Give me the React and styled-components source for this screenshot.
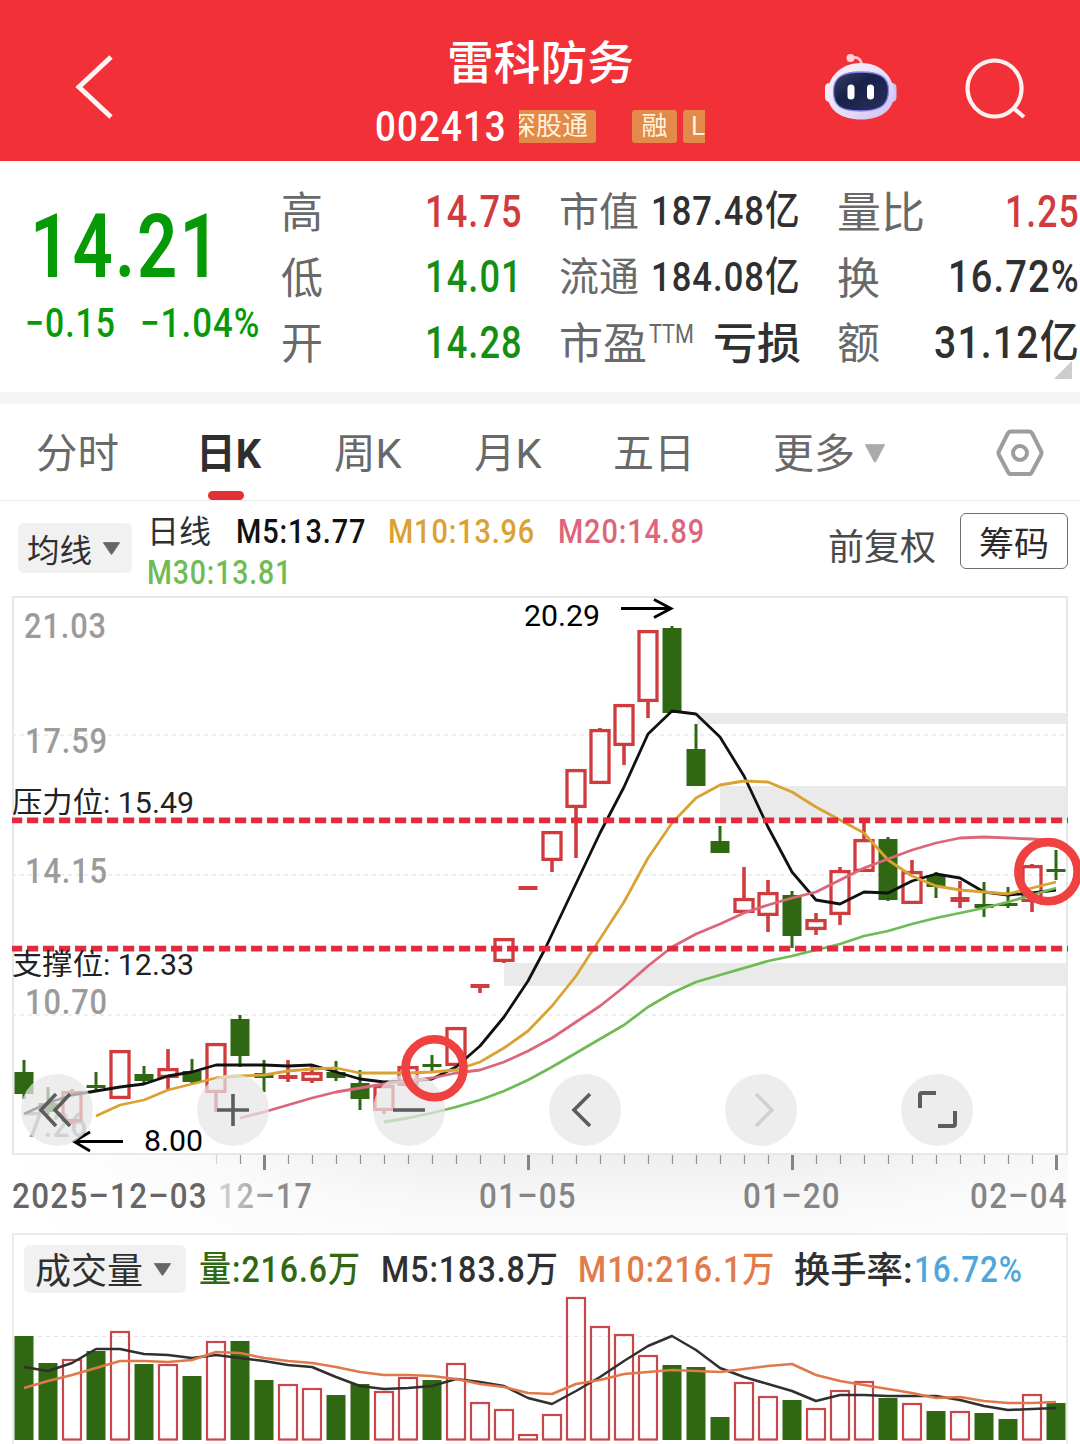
import React, { useLayoutEffect, useRef, useState } from 'react';
import styled, { createGlobalStyle } from 'styled-components';

const RED = '#d03c3e';
const GREEN = '#306713';

const GlobalStyle = createGlobalStyle`
    * {
        box-sizing: border-box;
    }

    body {
        margin: 0;
        background: #ffffff;
        font-family: Roboto, 'Noto Sans CJK SC', sans-serif;
    }

    button {
        border: none;
        background: none;
        padding: 0;
        font-family: inherit;
    }
`

const Page = styled.div`
    width: 1080px;
    height: 1444px;
    overflow: hidden;
    background: #ffffff;
`

const FitBox = styled.span`
    display: inline-block;
    flex: none;
    width: ${({$width}) => $width}px;
    height: ${({$line, $size}) => $line || $size * 1.2}px;
    line-height: ${({$line, $size}) => $line || $size * 1.2}px;
    font-size: ${({$size}) => $size}px;
    font-weight: ${({$weight}) => $weight || 400};
    color: ${({$color}) => $color || 'inherit'};
    margin-left: ${({$ml}) => $ml || 0}px;
    white-space: nowrap;
    text-align: left;
`

const FitInner = styled.span`
    display: inline-block;
    transform-origin: 0 50%;
    letter-spacing: ${({$spaced}) => ($spaced ? '0.03em' : 'normal')};
`

// Squeezes a line of text into the given width
const Fit = ({ children, ...props }) => {
    const ref = useRef(null);
    const [scale, setScale] = useState(1);
    const numeric = /\d/.test(children);
    const drop = (numeric ? 0 : props.$size * 0.06) + (props.$dy || 0);

    useLayoutEffect(() => {
        setScale(props.$width / ref.current.offsetWidth);
    }, [props.$width, children]);

    return (
        <FitBox {...props}>
            <FitInner ref={ref} $spaced={numeric} style={{ transform: `translateY(${drop}px) scaleX(${scale})` }}>
                {children}
            </FitInner>
        </FitBox>
    );
};

const Header = styled.header`
    display: flex;
    height: 161px;
    background: #f23038;
    color: #ffffff;
`

const HeaderSide = styled.div`
    width: 375px;
    flex: none;
    display: flex;
    align-items: flex-start;
    padding: 52px 0 0 ${({$pl}) => $pl}px;
`

const HeaderCenter = styled.div`
    width: 330px;
    flex: none;
    display: flex;
    flex-direction: column;
    align-items: center;
    padding-top: 32px;
`

const CodeRow = styled.div`
    display: flex;
    align-items: center;
    width: 330px;
    height: 36px;
    margin-top: 20px;
`

const Tag = styled.span`
    display: flex;
    flex: none;
    justify-content: ${({$align}) => $align || 'center'};
    width: ${({$width}) => $width}px;
    height: 33px;
    line-height: 33px;
    margin-left: ${({$ml}) => $ml}px;
    padding: ${({$pad}) => $pad || '0'};
    border-radius: ${({$radius}) => $radius || '3px'};
    overflow: hidden;
    font-size: 26px;
    white-space: nowrap;
    background: #e28a49;
    color: #fff3dc;
`

const SearchIcon = styled.svg`
    margin-left: 64px;
`

const Quote = styled.section`
    display: flex;
    height: 231px;
`

const PriceBlock = styled.div`
    width: 281px;
    padding: 37px 0 0 30px;
    color: #079a07;
`

const ChangeRow = styled.div`
    display: flex;
    margin-left: -5px;
`

const StatColumn = styled.div`
    position: relative;
    width: ${({$width}) => $width}px;
    margin-right: ${({$mr}) => $mr || 0}px;
    padding-top: 17px;
`

const StatRow = styled.div`
    display: flex;
    justify-content: space-between;
    align-items: center;
    height: 65.6px;
    color: #303030;
`

const StatLabel = styled.span`
    display: flex;
    align-items: center;
    color: #696969;
`

const Sup = styled.span`
    margin: -18px 0 0 2px;
`

const Corner = styled.svg`
    position: absolute;
    right: 8px;
    bottom: 13px;
`

const Divider = styled.div`
    height: 12px;
    background: #f5f5f5;
`

const TabBar = styled.nav`
    display: flex;
    height: 97px;
    border-bottom: 1px solid #ebebeb;
`

const Tab = styled.button`
    position: relative;
    display: flex;
    align-items: center;
    height: 98px;
    margin-left: ${({$ml}) => $ml}px;
    color: ${({$active}) => ($active ? '#2f2f2f' : '#696969')};

    &::after {
        content: '';
        display: ${({$active}) => ($active ? 'block' : 'none')};
        position: absolute;
        left: 12px;
        bottom: 2px;
        width: 36px;
        height: 9px;
        border-radius: 5px;
        background: #e13134;
    }
`

const Legend = styled.div`
    display: flex;
    height: 95px;
`

const Select = styled.button`
    display: flex;
    flex: none;
    align-items: center;
    width: ${({$width}) => $width}px;
    height: ${({$height}) => $height}px;
    margin: ${({$margin}) => $margin};
    border-radius: 6px;
    background: #f1f1f1;
    color: #303030;
`

const LegendLines = styled.div`
    width: 580px;
    margin-left: 15px;
    padding-top: 10px;
`

const LegendLine = styled.div`
    display: flex;
    align-items: center;
    height: 41px;
`

const LegendSide = styled.div`
    display: flex;
    margin-left: 101px;
    padding-top: 12px;
    color: #4a4a4a;
`

const ChipButton = styled.button`
    display: flex;
    align-items: center;
    justify-content: center;
    width: 108px;
    height: 56px;
    margin-left: 24px;
    border: 1px solid #707070;
    border-radius: 6px;
    color: #2b2b2b;
`

const ChartArea = styled.section`
    position: relative;
    height: 637px;
`

const Layer = styled.svg`
    display: block;
    position: absolute;
    left: 0;
    top: 0;
    pointer-events: none;
`

const Controls = styled.div`
    position: absolute;
    left: 21px;
    top: 478px;
    display: flex;
    gap: 104px;
`

const RoundButton = styled.button`
    width: 72px;
    height: 72px;
    border-radius: 50%;
    background: rgba(230, 230, 230, 0.72);

    svg {
        display: block;
    }
`

const VolumePanel = styled.section`
    position: relative;
    height: 211px;
    margin: 0 12px;
    border: 2px solid #ebebeb;
    border-width: 2px 2px 0;
`

const VolumeHeader = styled.div`
    display: flex;
    align-items: center;
    height: 72px;
    padding-left: 10px;
`

const VolumeSvg = styled.svg`
    display: block;
    margin: -14px 0 0 -14px;
`

const CaretSvg = styled.svg`
    margin-left: ${({$gap}) => $gap}px;
`

const Caret = ({ width, height, color, gap }) => (
    <CaretSvg width={width} height={height} viewBox="0 0 22 18" preserveAspectRatio="none" $gap={gap}>
        <path d="M1.5 0.8h19L11.8 16.4q-.8 1.2-1.6 0z" fill={color} stroke={color} strokeLinejoin="round" />
    </CaretSvg>
);

const Robot = () => (
    <svg width="74" height="70" viewBox="0 0 74 70">
        <defs>
            <linearGradient id="shell" x1="0" y1="0" x2="1" y2="1">
                <stop offset="0" stopColor="#fff4f8" />
                <stop offset=".55" stopColor="#e6def9" />
                <stop offset="1" stopColor="#cdbdf0" />
            </linearGradient>
            <linearGradient id="face" x1="0" y1="0" x2="1" y2="1">
                <stop offset="0" stopColor="#39415f" />
                <stop offset=".4" stopColor="#18214a" />
                <stop offset="1" stopColor="#28305c" />
            </linearGradient>
        </defs>
        <path d="M28 5.5q9-1 10 8" fill="none" stroke="#ffc9d2" strokeWidth="2.6" />
        <circle cx="26.5" cy="6" r="4" fill="#ffd3da" />
        <rect x="1" y="31" width="9" height="19" rx="4.5" fill="#f4ebfb" />
        <rect x="63.500" y="31" width="9" height="19" rx="4.5" fill="#cdc3f5" />
        <path d="M37 11C56 11 70 24 70 42C70 58 57 67.5 37 67.5S3.5 58 3.5 42C3.5 24 18 11 37 11z" fill="url(#shell)" />
        <path d="M37 20C56 20 64.5 25 64.5 38S59 59 37 59 9.5 53 9.5 39 19 20 37 20z" fill="url(#face)" stroke="#8b86ea" strokeWidth="1.3" />
        <rect x="23.5" y="32.5" width="7" height="15" rx="3.5" fill="#ffffff" />
        <rect x="43" y="32.5" width="7" height="15" rx="3.5" fill="#ffffff" />
    </svg>
);

// [up, high, body top, body bottom, low], x is taken from the index
const candles = [
    [0, 1060, 1072, 1094, 1099], [0, 1087, 1103, 1112, 1115], [1, 1089, 1091, 1122, 1124], [0, 1072, 1085, 1088, 1091],
    [1, 1050, 1050, 1099, 1099], [0, 1066, 1074, 1081, 1084], [1, 1049, 1068, 1078, 1091], [0, 1059, 1071, 1082, 1084],
    [1, 1043, 1043, 1093, 1112], [0, 1015, 1019, 1056, 1067], [0, 1060, 1073, 1078, 1092], [1, 1060, 1075, 1079, 1082],
    [1, 1066, 1072, 1081, 1083], [0, 1061, 1072, 1078, 1081], [0, 1070, 1083, 1099, 1110], [1, 1085, 1085, 1111, 1114],
    [1, 1066, 1066, 1086, 1086], [0, 1055, 1064, 1067, 1072], [1, 1027, 1027, 1066, 1066], [1, 984, 984, 988, 993],
    [1, 938, 938, 962, 963], [1, 886, 886, 890, 890], [1, 831, 831, 861, 872], [1, 769, 769, 808, 858],
    [1, 728, 729, 784, 784], [1, 704, 704, 746, 765], [1, 630, 630, 702, 718], [0, 626, 628, 713, 713],
    [0, 724, 749, 786, 786], [0, 826, 841, 853, 853], [1, 867, 898, 913, 913], [1, 880, 892, 916, 932],
    [0, 891, 895, 936, 948], [1, 913, 919, 930, 935], [1, 867, 870, 915, 925], [1, 822, 839, 872, 872],
    [0, 837, 839, 900, 901], [1, 860, 871, 904, 904], [0, 872, 875, 887, 898], [1, 881, 897, 902, 908],
    [0, 882, 904, 908, 917], [0, 887, 903, 906, 908], [1, 864, 865, 902, 912], [0, 850, 869, 872, 880]
];

const m5 = '24,1114 48,1103 72,1095 96,1091 120,1087 144,1084 168,1076 192,1072 216,1065 264,1065 288,1066 312,1065 336,1072 360,1079 384,1082 408,1081 432,1079 456,1067 480,1046 504,1017 528,981 545,949 600,833 624,787 648,734 672,711 696,714 720,737 744,776 768,827 792,872 816,900 840,904 864,892 888,893 912,881 936,874 960,878 984,892 1008,895 1032,893 1056,890';
const m10 = '96,1116 120,1105 144,1100 168,1090 192,1084 216,1078 240,1076 264,1075 288,1071 312,1069 336,1068 360,1073 408,1073 432,1072 456,1070 480,1062 504,1048 528,1031 552,1006 576,976 596,945 624,902 648,858 672,823 696,798 720,785 744,781 768,782 792,792 816,807 840,820 864,833 888,860 912,876 936,886 960,890 984,892 1008,894 1032,888 1056,882';
const m20 = '240,1118 264,1112 288,1105 312,1098 336,1092 360,1088 384,1084 408,1081 432,1078 456,1073 480,1070 504,1062 528,1051 552,1038 576,1022 600,1006 624,987 648,966 672,947 696,934 720,924 744,913 768,905 792,898 816,892 840,880 864,868 888,859 912,850 936,843 960,838 984,837 1032,839 1056,841';
const m30 = '384,1122 408,1118 432,1113 456,1107 480,1100 504,1091 528,1080 552,1067 576,1053 600,1039 624,1025 648,1007 672,993 696,982 720,975 768,961 792,956 816,950 840,944 864,936 888,931 912,924 936,918 960,913 984,908 1008,902 1032,895 1056,888';

// [up, top]
const volumes = [
    [0, 1336], [0, 1363], [1, 1359], [0, 1351], [1, 1331], [0, 1364], [1, 1364], [0, 1376], [1, 1341], [0, 1341], [0, 1380],
    [1, 1384], [1, 1388], [0, 1395], [0, 1384], [1, 1391], [1, 1377], [0, 1380], [1, 1363], [1, 1402], [1, 1409], [1, 1434],
    [1, 1414], [1, 1297], [1, 1326], [1, 1334], [1, 1355], [0, 1365], [0, 1367], [0, 1417], [1, 1382], [1, 1396], [0, 1400],
    [1, 1408], [1, 1390], [1, 1381], [0, 1398], [1, 1403], [0, 1411], [1, 1411], [0, 1413], [0, 1419], [1, 1394], [0, 1403]
];

const volM5 = [1367, 1371, 1363, 1349, 1349, 1354, 1355, 1358, 1355, 1358, 1361, 1365, 1367, 1377, 1386, 1389, 1388, 1386, 1379, 1382, 1386, 1398, 1404, 1391, 1377, 1361, 1346, 1336, 1350, 1368, 1377, 1384, 1391, 1401, 1395, 1395, 1396, 1396, 1396, 1400, 1406, 1410, 1409, 1408];
const volM10 = [1388, 1381, 1375, 1368, 1361, 1361, 1362, 1360, 1352, 1353, 1358, 1361, 1363, 1367, 1372, 1375, 1375, 1376, 1379, 1384, 1387, 1393, 1394, 1384, 1380, 1374, 1372, 1370, 1371, 1372, 1369, 1366, 1364, 1375, 1381, 1385, 1389, 1393, 1398, 1397, 1401, 1403, 1403, 1402];

const xAt = i => 24 + i * 24;
const toPoints = list => list.map((y, i) => `${xAt(i)},${y}`).join(' ');

const Candle = ({ x, data }) => {
    const [up, high, top, bottom, low] = data;
    const color = up ? RED : GREEN;
    const hollow = up && bottom - top > 6;

    return (
        <g stroke={color} fill={color}>
            {high < top && <path d={`M${x} ${high}V${top}`} strokeWidth={up ? 3.6 : 3} />}
            {low > bottom && <path d={`M${x} ${bottom}V${low}`} strokeWidth={up ? 3.6 : 3} />}
            {hollow
                ? <rect x={x - 9} y={top + 1.6} width="18" height={bottom - top - 3.2} fill="none" strokeWidth="3.3" />
                : <rect x={x - 9.5} y={top} width="19" height={bottom - top} stroke="none" />}
        </g>
    );
};

const ChartText = ({ x, y, width, size, weight, spacing, fill, children }) => (
    <text
        x={x}
        y={y}
        fontSize={size}
        fontWeight={weight || 400}
        letterSpacing={spacing || 0}
        fill={fill}
        textLength={width}
        lengthAdjust="spacingAndGlyphs"
    >
        {children}
    </text>
);

const prices = [
    { text: '21.03', x: 24, y: 638 },
    { text: '17.59', x: 25, y: 752.5 },
    { text: '14.15', x: 25, y: 883 },
    { text: '10.70', x: 25, y: 1014 }
];

const dates = [
    { text: '2025–12–03', x: 12, width: 196, fill: '#666666' },
    { text: '12–17', x: 218, width: 95, fill: 'url(#dateFade)' },
    { text: '01–05', x: 479, width: 98, fill: '#858585' },
    { text: '01–20', x: 743, width: 98, fill: '#858585' },
    { text: '02–04', x: 970, width: 98, fill: '#858585' }
];

const KLineChart = () => (
    <Layer width="1080" height="637" viewBox="0 596 1080 637">
        <defs>
            <linearGradient id="axis" x1="0" y1="0" x2="0" y2="1">
                <stop offset="0" stopColor="#eeeeee" />
                <stop offset=".5" stopColor="#f7f7f7" />
                <stop offset="1" stopColor="#fbfbfb" />
            </linearGradient>
            <linearGradient id="fade" x1="0" y1="0" x2="1" y2="0">
                <stop offset="0" stopColor="#ffffff" />
                <stop offset=".16" stopColor="#ffffff" stopOpacity=".75" />
                <stop offset=".4" stopColor="#ffffff" stopOpacity="0" />
                <stop offset=".75" stopColor="#ffffff" stopOpacity="0" />
                <stop offset="1" stopColor="#ffffff" stopOpacity=".6" />
            </linearGradient>
            <linearGradient id="dateFade" x1="0" y1="0" x2="1" y2="0">
                <stop offset="0" stopColor="#d6d6d6" />
                <stop offset=".6" stopColor="#8f8f8f" />
                <stop offset="1" stopColor="#858585" />
            </linearGradient>
        </defs>

        <rect x="12" y="1154" width="1056" height="80" fill="url(#axis)" />
        <rect x="12" y="1154" width="1056" height="80" fill="url(#fade)" />

        <path d="M697 713H1068V724H697zM720 786H1068V820H720zM504 963H1068V986H504z" fill="#eaeaea" />
        <rect x="13" y="597" width="1054" height="557" fill="none" stroke="#e8e8e8" strokeWidth="2" />
        {[735, 875, 1015].map(y => (
            <path key={y} d={`M12 ${y}H1067`} stroke="#e9e9e9" strokeWidth="1.6" strokeDasharray="4 4" />
        ))}

        {prices.map(({ text, x, y }) => (
            <ChartText key={text} x={x} y={y} width={83} size={35} weight={500} spacing={1} fill="#9b9b9b">{text}</ChartText>
        ))}
        <ChartText x={26} y={1137} width={62} size={35} weight={500} spacing={1} fill="#9b9b9b">7.26</ChartText>

        {candles.map((data, i) => <Candle key={i} x={xAt(i)} data={data} />)}

        <g fill="none" strokeWidth="2.8" strokeLinejoin="round">
            <polyline points={m5} stroke="#111111" />
            <polyline points={m10} stroke="#d9a232" />
            <polyline points={m20} stroke="#dc667a" />
            <polyline points={m30} stroke="#6fbb55" />
        </g>

        <g stroke="#e02c3e" strokeWidth="5.6" strokeDasharray="11.2 4.8" strokeDashoffset="1">
            <path d="M12 820.4H1068" />
            <path d="M12 948.6H1068" />
        </g>
        <ChartText x={12} y={813} width={182} size={29} fill="#222222">压力位: 15.49</ChartText>
        <ChartText x={12} y={975} width={182} size={29} fill="#222222">支撑位: 12.33</ChartText>

        <ChartText x={524} y={626} width={76} size={30} fill="#000000">20.29</ChartText>
        <path d="M621 608.5H670M654 599.5L671 608.5L654 617.5" fill="none" stroke="#000000" strokeWidth="2.8" />
        <ChartText x={144} y={1151} width={59} size={30} fill="#000000">8.00</ChartText>
        <path d="M123 1141.5H75M90 1132L74 1141.5L90 1151" fill="none" stroke="#000000" strokeWidth="2.8" />

        {candles.map((_, i) => {
            const x = xAt(i) + 0.5;
            if (i < 8) return null;
            return (i - 10) % 11 === 0
                ? <path key={i} d={`M${x} 1155V1170`} stroke="#858585" strokeWidth="3" />
                : <path key={i} d={`M${x} 1155V1164`} stroke={i === 8 ? '#d4d4d4' : '#929292'} strokeWidth="1.2" />;
        })}
        {dates.map(({ text, x, width, fill }) => (
            <ChartText key={text} x={x} y={1208} width={width} size={35} weight={500} spacing={1.5} fill={fill}>{text}</ChartText>
        ))}
    </Layer>
);

const controls = [
    { d: 'M35 20L20 36L35 52M49 20L34 36L49 52' },
    { d: 'M20 36H52M36 20V52' },
    { d: 'M20 36H52' },
    { d: 'M41 20L25 36L41 52' },
    { d: 'M31 20L47 36L31 52', color: '#d0d0d0' },
    { d: 'M19 34V21Q19 19 21 19H35M54 37V50Q54 52 52 52H37', strokeWidth: 4 }
];

const App = () => (
    <Page>
        <GlobalStyle />
        <Header>
            <HeaderSide $pl={72}>
                <svg width="46" height="70" viewBox="0 0 46 70">
                    <path d="M39 5L7 35L39 65" fill="none" stroke="#fff4f3" strokeWidth="5" />
                </svg>
            </HeaderSide>
            <HeaderCenter>
                <Fit $width={187} $size={46} $line={56} $weight={500}>雷科防务</Fit>
                <CodeRow>
                    <Fit $width={132} $size={42} $weight={500} $dy={0.5}>002413</Fit>
                    <Tag $width={77} $ml={12} $align="flex-end" $pad="0 8px 0 0" $radius="0 3px 3px 0">深股通</Tag>
                    <Tag $width={45} $ml={36}>融</Tag>
                    <Tag $width={22} $ml={6} $align="flex-start" $pad="0 0 0 8px" $radius="3px 0 0 3px">L</Tag>
                </CodeRow>
            </HeaderCenter>
            <HeaderSide $pl={119}>
                <Robot />
                <SearchIcon width="70" height="70" viewBox="0 0 70 70">
                    <path d="M32.5 8.5a27 28 0 1 0 .1 0zM52 56.5L62 65" fill="none" stroke="#fff1ef" strokeWidth="4.2" />
                </SearchIcon>
            </HeaderSide>
        </Header>

        <Quote>
            <PriceBlock>
                <Fit $width={192} $size={89} $line={98} $weight={600}>14.21</Fit>
                <ChangeRow>
                    <Fit $width={91} $size={40} $line={54} $weight={500} $dy={1}>−0.15</Fit>
                    <Fit $width={120} $size={40} $line={54} $weight={500} $dy={1} $ml={24}>−1.04%</Fit>
                </ChangeRow>
            </PriceBlock>
            <StatColumn $width={242} $mr={36}>
                <StatRow>
                    <StatLabel><Fit $width={42} $size={43}>高</Fit></StatLabel>
                    <Fit $width={98} $size={45} $weight={500} $dy={0.5} $color="#d03c3e">14.75</Fit>
                </StatRow>
                <StatRow>
                    <StatLabel><Fit $width={42} $size={43}>低</Fit></StatLabel>
                    <Fit $width={98} $size={45} $weight={500} $dy={0.5} $color="#148f14">14.01</Fit>
                </StatRow>
                <StatRow>
                    <StatLabel><Fit $width={42} $size={43}>开</Fit></StatLabel>
                    <Fit $width={98} $size={45} $weight={500} $dy={0.5} $color="#148f14">14.28</Fit>
                </StatRow>
            </StatColumn>
            <StatColumn $width={242} $mr={36}>
                <StatRow>
                    <StatLabel><Fit $width={80} $size={40}>市值</Fit></StatLabel>
                    <Fit $width={150} $size={41} $weight={500} $dy={1}>187.48亿</Fit>
                </StatRow>
                <StatRow>
                    <StatLabel><Fit $width={80} $size={40}>流通</Fit></StatLabel>
                    <Fit $width={150} $size={41} $weight={500} $dy={1}>184.08亿</Fit>
                </StatRow>
                <StatRow>
                    <StatLabel>
                        <Fit $width={88} $size={43}>市盈</Fit>
                        <Sup><Fit $width={45} $size={25}>TTM</Fit></Sup>
                    </StatLabel>
                    <Fit $width={88} $size={43} $weight={500}>亏损</Fit>
                </StatRow>
            </StatColumn>
            <StatColumn $width={243}>
                <StatRow>
                    <StatLabel><Fit $width={88} $size={43}>量比</Fit></StatLabel>
                    <Fit $width={75} $size={45} $weight={500} $dy={0.5} $color="#d03c3e">1.25</Fit>
                </StatRow>
                <StatRow>
                    <StatLabel><Fit $width={43} $size={43}>换</Fit></StatLabel>
                    <Fit $width={132} $size={45} $weight={500} $dy={0.5}>16.72%</Fit>
                </StatRow>
                <StatRow>
                    <StatLabel><Fit $width={43} $size={43}>额</Fit></StatLabel>
                    <Fit $width={146} $size={45} $weight={500} $dy={0.5}>31.12亿</Fit>
                </StatRow>
                <Corner width="18" height="18" viewBox="0 0 18 18"><path d="M18 0V18H0z" fill="#cccccc" /></Corner>
            </StatColumn>
        </Quote>
        <Divider />

        <TabBar>
            <Tab $ml={36}><Fit $width={83} $size={41}>分时</Fit></Tab>
            <Tab $ml={77} $active><Fit $width={65} $size={41} $weight={700}>日K</Fit></Tab>
            <Tab $ml={73}><Fit $width={68} $size={41}>周K</Fit></Tab>
            <Tab $ml={72}><Fit $width={68} $size={41}>月K</Fit></Tab>
            <Tab $ml={71}><Fit $width={82} $size={41}>五日</Fit></Tab>
            <Tab $ml={78}>
                <Fit $width={82} $size={41}>更多</Fit>
                <Caret width={22} height={19} color="#aaaaaa" gap={9} />
            </Tab>
            <Tab $ml={109}>
                <svg width="50" height="50" viewBox="0 0 50 50">
                    <path d="M16 3.5H34Q36 3.5 37 5L46 23Q47 25 46 27L37 44Q36 46 34 46H16Q14 46 13 44L4 27Q3 25 4 23L13 5Q14 3.5 16 3.5z" fill="none" stroke="#9d9d9d" strokeWidth="4" />
                    <circle cx="25" cy="25" r="7" fill="none" stroke="#9d9d9d" strokeWidth="4" />
                </svg>
            </Tab>
        </TabBar>

        <Legend>
            <Select $width={114} $height={50} $margin="22px 0 0 18px">
                <Fit $width={65} $size={32} $ml={9} $dy={1}>均线</Fit>
                <Caret width={19} height={13} color="#666666" gap={10} />
            </Select>
            <LegendLines>
                <LegendLine>
                    <Fit $width={64} $size={32} $dy={-0.5} $color="#303030">日线</Fit>
                    <Fit $width={130} $size={33} $weight={500} $ml={25} $color="#111111">M5:13.77</Fit>
                    <Fit $width={147} $size={33} $weight={500} $ml={22} $color="#d9a232">M10:13.96</Fit>
                    <Fit $width={147} $size={33} $weight={500} $ml={23} $color="#dc667a">M20:14.89</Fit>
                </LegendLine>
                <LegendLine>
                    <Fit $width={145} $size={33} $weight={500} $color="#6fbb55">M30:13.81</Fit>
                </LegendLine>
            </LegendLines>
            <LegendSide>
                <Fit $width={108} $size={36} $line={64} $dy={0.5}>前复权</Fit>
                <ChipButton><Fit $width={70} $size={34} $dy={1}>筹码</Fit></ChipButton>
            </LegendSide>
        </Legend>

        <ChartArea>
            <KLineChart />
            <Controls>
                {controls.map(({ d, color, strokeWidth }) => (
                    <RoundButton key={d}>
                        <svg width="72" height="72" viewBox="0 0 72 72">
                            <path d={d} fill="none" stroke={color || '#5d5d5d'} strokeWidth={strokeWidth || 3.6} />
                        </svg>
                    </RoundButton>
                ))}
            </Controls>
            <Layer width="1080" height="637" viewBox="0 596 1080 637">
                <g fill="none" stroke="#ee4140" strokeWidth="8.6">
                    <circle cx="434.5" cy="1068.3" r="29" />
                    <circle cx="1048" cy="871.7" r="29.6" />
                </g>
            </Layer>
        </ChartArea>

        <VolumePanel>
            <VolumeHeader>
                <Select $width={162} $height={48} $margin="-4px 0 0">
                    <Fit $width={108} $size={36} $ml={11} $dy={1.5}>成交量</Fit>
                    <Caret width={19} height={13} color="#666666" gap={10} />
                </Select>
                <Fit $width={162} $size={36} $weight={500} $ml={13} $color={GREEN}>量:216.6万</Fit>
                <Fit $width={178} $size={36} $weight={500} $ml={20} $color="#303030">M5:183.8万</Fit>
                <Fit $width={198} $size={36} $weight={500} $ml={19} $color="#e37a49">M10:216.1万</Fit>
                <Fit $width={119} $size={36} $weight={500} $ml={18} $dy={-1} $color="#303030">换手率:</Fit>
                <Fit $width={109} $size={36} $weight={500} $ml={1} $color="#4fa6da">16.72%</Fit>
            </VolumeHeader>
            <VolumeSvg width="1080" height="151" viewBox="0 1293 1080 151">
                <path d="M14 1336.5H1067" stroke="#e3e3e3" strokeWidth="1.2" strokeDasharray="4 4" />
                {volumes.map(([up, top], i) => (up
                    ? <rect key={i} x={xAt(i) - 9} y={top + 1} width="18" height={1438.5 - top} fill="none" stroke="#c8474a" strokeWidth="2.2" />
                    : <rect key={i} x={xAt(i) - 9.5} y={top} width="19" height={1440 - top} fill={GREEN} />
                ))}
                <g fill="none" strokeWidth="2.5" strokeLinejoin="round">
                    <polyline points={toPoints(volM5)} stroke="#303030" />
                    <polyline points={toPoints(volM10)} stroke="#e0784a" />
                </g>
            </VolumeSvg>
        </VolumePanel>
    </Page>
);

export default App;
